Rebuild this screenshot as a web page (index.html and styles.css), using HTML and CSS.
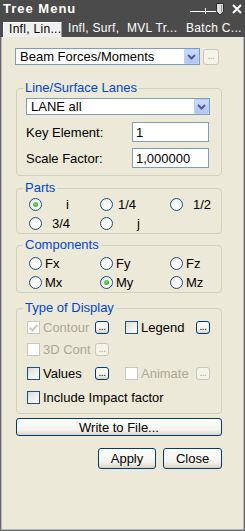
FILE: index.html
```html
<!DOCTYPE html>
<html lang="en">
<head>
  <meta charset="UTF-8" />
  <title>Tree Menu</title>
  <link rel="stylesheet" href="styles.css">
</head>
<body>
  <div class="window">
    <div class="titlebar">
      <span class="title">Tree Menu</span>
      <div class="title-tools">
        <svg class="pin" width="36" height="15" viewBox="0 0 36 15">
          <line x1="2" y1="10.5" x2="28" y2="10.5" stroke="#fff" stroke-width="1"/>
          <line x1="17.5" y1="7" x2="17.5" y2="13" stroke="#fff" stroke-width="1"/>
          <polygon points="28.5,2.5 35.5,2.5 35.5,10.5 32,14 28.5,10.5" fill="#dedede" stroke="#2a2a2a" stroke-width="1"/>
          <line x1="33.5" y1="4" x2="33.5" y2="11" stroke="#8a8a8a" stroke-width="1"/>
        </svg>
        <svg class="close-x" width="10" height="10" viewBox="0 0 10 10">
          <path d="M1 1 L9 9 M9 1 L1 9" stroke="#fff" stroke-width="2"/>
        </svg>
      </div>
    </div>

    <div class="tabs">
      <div class="tab active">Infl, Lin...</div>
      <div class="tab">Infl, Surf,</div>
      <div class="tab">MVL Tr...</div>
      <div class="tab">Batch C...</div>
    </div>

    <div class="content">
      <div class="top-row">
        <div class="combo wide">
          <span class="combo-text">Beam Forces/Moments</span>
          <span class="combo-btn"><svg width="9" height="6" viewBox="0 0 9 6"><path d="M1 1 L4.5 4.5 L8 1" fill="none" stroke="#4d6185" stroke-width="2"/></svg></span>
        </div>
        <span class="dots-btn big off">...</span>
      </div>

      <fieldset class="group lanes">
        <legend>Line/Surface Lanes</legend>
        <div class="lanes-body">
          <div class="combo lane">
            <span class="combo-text">LANE all</span>
            <span class="combo-btn"><svg width="9" height="6" viewBox="0 0 9 6"><path d="M1 1 L4.5 4.5 L8 1" fill="none" stroke="#4d6185" stroke-width="2"/></svg></span>
          </div>
          <div class="field">
            <label>Key Element:</label>
            <input type="text" value="1">
          </div>
          <div class="field second">
            <label>Scale Factor:</label>
            <input type="text" value="1,000000">
          </div>
        </div>
      </fieldset>

      <fieldset class="group parts">
        <legend>Parts</legend>
        <div class="radio-grid">
          <div class="radio-item"><span class="radio checked"></span><span class="lbl-far">i</span></div>
          <div class="radio-item"><span class="radio"></span><span class="lbl-near">1/4</span></div>
          <div class="radio-item"><span class="radio"></span><span class="lbl-mid">1/2</span></div>
          <div class="radio-item"><span class="radio"></span><span class="lbl-mid">3/4</span></div>
          <div class="radio-item"><span class="radio"></span><span class="lbl-far">j</span></div>
        </div>
      </fieldset>

      <fieldset class="group components">
        <legend>Components</legend>
        <div class="radio-grid">
          <div class="radio-item"><span class="radio"></span><span>Fx</span></div>
          <div class="radio-item"><span class="radio"></span><span>Fy</span></div>
          <div class="radio-item"><span class="radio"></span><span>Fz</span></div>
          <div class="radio-item"><span class="radio"></span><span>Mx</span></div>
          <div class="radio-item"><span class="radio checked"></span><span>My</span></div>
          <div class="radio-item"><span class="radio"></span><span>Mz</span></div>
        </div>
      </fieldset>

      <fieldset class="group display">
        <legend>Type of Display</legend>
        <div class="display-body">
          <div class="opt-row">
            <div class="opt left off"><span class="check checked"></span><span>Contour</span></div>
            <span class="dots-btn">...</span>
            <div class="opt right"><span class="check"></span><span>Legend</span></div>
            <span class="dots-btn">...</span>
          </div>
          <div class="opt-row">
            <div class="opt left off"><span class="check"></span><span>3D Cont</span></div>
            <span class="dots-btn off">...</span>
          </div>
          <div class="opt-row spaced">
            <div class="opt left"><span class="check"></span><span>Values</span></div>
            <span class="dots-btn">...</span>
            <div class="opt right off"><span class="check"></span><span>Animate</span></div>
            <span class="dots-btn off">...</span>
          </div>
          <div class="opt-row spaced">
            <div class="opt"><span class="check"></span><span>Include Impact factor</span></div>
          </div>
        </div>
      </fieldset>

      <button class="btn write">Write to File...</button>
      <div class="actions">
        <button class="btn apply">Apply</button>
        <button class="btn close">Close</button>
      </div>
    </div>
  </div>
</body>
</html>
```

FILE: styles.css
```css
* {
  box-sizing: border-box;
  margin: 0;
  padding: 0;
}

body {
  font-family: "Liberation Sans", Arial, sans-serif;
  font-size: 13px;
  color: #000;
  background: #ece9d8;
  width: 245px;
  height: 531px;
  overflow: hidden;
}

.window {
  width: 245px;
  height: 531px;
  display: flex;
  flex-direction: column;
  background: #4b4b4b;
}

/* title bar */
.titlebar {
  height: 17px;
  display: flex;
  align-items: center;
  justify-content: space-between;
  padding: 0 3px;
  color: #fff;
}

.title {
  font-weight: bold;
  font-size: 13px;
  letter-spacing: 1px;
}

.title-tools {
  display: flex;
  align-items: center;
  gap: 8px;
}

.pin {
  display: block;
}

.close-x {
  display: block;
}

/* tabs */
.tabs {
  height: 20px;
  display: flex;
  align-items: flex-end;
  padding-left: 3px;
}

.tab {
  width: 59px;
  height: 15px;
  padding-left: 6px;
  color: #fff;
  font-size: 12px;
  line-height: 13px;
  white-space: nowrap;
  letter-spacing: 0.3px;
}

.tab.active {
  background: #efefef;
  color: #000;
  border-top: 1px solid #fff;
  border-left: 1px solid #fff;
  border-right: 1px solid #9a9a9a;
  padding-left: 5px;
}

/* content */
.content {
  flex: 1;
  background: #ece9d8;
  border: 1px solid #6b6b6b;
  border-top: 0;
  box-shadow: inset 1px 0 0 #b5b5b5, inset -1px 0 0 #b5b5b5, inset 0 -1px 0 #b5b5b5;
  padding: 11px 0 0 15px;
}

.top-row {
  display: flex;
  align-items: flex-start;
  gap: 3px;
  margin-left: -1px;
}

.combo {
  display: flex;
  align-items: center;
  height: 17px;
  border: 1px solid #7f9db9;
  background: #fff;
  padding-left: 4px;
}

.combo.wide {
  width: 185px;
}

.combo.lane {
  width: 184px;
}

.combo-text {
  flex: 1;
  line-height: 15px;
}

.combo-btn {
  width: 15px;
  height: 15px;
  background: linear-gradient(#cbdafc, #b0c6f6);
  border: 1px solid #bccff8;
  border-radius: 1px;
  display: flex;
  align-items: center;
  justify-content: center;
}

.combo-btn svg {
  display: block;
}

.dots-btn {
  width: 14px;
  height: 13px;
  border: 1px solid #003c74;
  border-radius: 3px;
  background: linear-gradient(#fff, #f1f0ea 70%, #d8d2c6);
  font-size: 10px;
  line-height: 9px;
  text-align: center;
  letter-spacing: -0.5px;
  color: #000;
}

.dots-btn.big {
  width: 16px;
  height: 16px;
  margin-top: 1px;
  line-height: 12px;
}

.dots-btn.off {
  border-color: #c9c7ba;
  color: #aca899;
  background: #f5f4ea;
}

/* group boxes */
.group {
  width: 206px;
  border: 1px solid #d0d0bf;
  border-radius: 4px;
  padding: 0;
  min-width: 0;
}

.group legend {
  margin-left: 6px;
  padding: 0 2px;
  color: #0046d5;
  font-size: 13px;
  line-height: 14px;
}

.lanes {
  margin-top: 16px;
}

.lanes-body {
  padding: 3px 0 7px 9px;
}

.field {
  display: flex;
  align-items: center;
  height: 20px;
  margin-top: 7px;
}

.field.second {
  margin-top: 6px;
}

.field label {
  width: 106px;
}

.field input {
  width: 77px;
  height: 20px;
  border: 1px solid #7f9db9;
  background: #fff;
  padding-left: 3px;
  font-family: inherit;
  font-size: 13px;
  color: #000;
  outline: none;
}

.parts {
  margin-top: 5px;
}

.components {
  margin-top: 4px;
}

.radio-grid {
  display: grid;
  grid-template-columns: 71px 70px 1fr;
  grid-auto-rows: 19px;
  padding-left: 12px;
}

.components .radio-grid {
  padding-top: 2px;
}

.radio-item {
  display: flex;
  align-items: center;
  gap: 3px;
  white-space: nowrap;
}

.radio {
  width: 13px;
  height: 13px;
  border: 1px solid #1c5180;
  border-radius: 50%;
  background: radial-gradient(circle at 60% 60%, #fff 30%, #dcdcd7 100%);
  display: flex;
  align-items: center;
  justify-content: center;
  flex-shrink: 0;
}

.radio.checked::after {
  content: "";
  width: 5px;
  height: 5px;
  border-radius: 50%;
  background: radial-gradient(circle at 40% 40%, #6be06b, #1f9b1f);
}

.lbl-far {
  margin-left: 21px;
}

.lbl-near {
  margin-left: 2px;
}

.lbl-mid {
  margin-left: 7px;
}

/* type of display */
.display {
  margin-top: 8px;
}

.display-body {
  padding: 2px 0 6px 10px;
}

.opt-row {
  display: flex;
  align-items: center;
  height: 20px;
  margin-top: 2px;
}

.opt-row:first-child {
  margin-top: 0;
}

.opt-row.spaced {
  margin-top: 4px;
}

.opt {
  display: flex;
  align-items: center;
  gap: 3px;
  white-space: nowrap;
}

.opt.left {
  width: 68px;
}

.opt.right {
  width: 71px;
  margin-left: 16px;
}

.opt.off {
  color: #aca899;
}

.check {
  width: 13px;
  height: 13px;
  border: 1px solid #1c5180;
  background: linear-gradient(135deg, #dcdcd7, #fff);
  flex-shrink: 0;
  position: relative;
}

.opt.off .check {
  border-color: #cac8bb;
  background: #fff;
}

.check.checked::after {
  content: "";
  position: absolute;
  left: 3px;
  top: 1px;
  width: 3px;
  height: 6px;
  border: solid #21a121;
  border-width: 0 2px 2px 0;
  transform: rotate(40deg);
}

.opt.off .check.checked::after {
  border-color: #cac8bb;
}

/* buttons */
.btn {
  display: block;
  border: 1px solid #003c74;
  border-radius: 3px;
  background: linear-gradient(#fff, #f3f2ec 70%, #d9d3c7);
  font-family: inherit;
  font-size: 13px;
  color: #000;
}

.write {
  width: 206px;
  height: 18px;
  margin-top: 4px;
  line-height: 15px;
}

.actions {
  display: flex;
  justify-content: flex-end;
  gap: 7px;
  width: 206px;
  margin-top: 12px;
}

.apply {
  width: 58px;
  height: 21px;
}

.close {
  width: 59px;
  height: 21px;
}
```
